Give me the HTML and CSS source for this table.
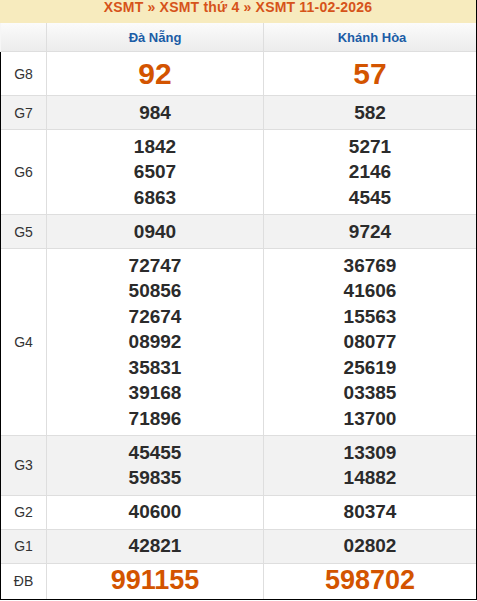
FILE: index.html
```html
<!DOCTYPE html>
<html lang="vi">
<head>
<meta charset="utf-8">
<title>XSMT 11-02-2026</title>
<link rel="stylesheet" href="styles.css">
</head>
<body>
<div class="board">
  <div class="title">XSMT » XSMT thứ 4 » XSMT 11-02-2026</div>
  <div class="row head">
    <div class="cell label"></div>
    <div class="cell prov">Đà Nẵng</div>
    <div class="cell prov c3">Khánh Hòa</div>
  </div>
  <div class="body">
    <div class="row g8">
      <div class="cell label">G8</div>
      <div class="cell nums big"><div>92</div></div>
      <div class="cell nums big c3"><div>57</div></div>
    </div>
    <div class="row alt">
      <div class="cell label">G7</div>
      <div class="cell nums"><div>984</div></div>
      <div class="cell nums c3"><div>582</div></div>
    </div>
    <div class="row">
      <div class="cell label">G6</div>
      <div class="cell nums"><div>1842</div><div>6507</div><div>6863</div></div>
      <div class="cell nums c3"><div>5271</div><div>2146</div><div>4545</div></div>
    </div>
    <div class="row alt">
      <div class="cell label">G5</div>
      <div class="cell nums"><div>0940</div></div>
      <div class="cell nums c3"><div>9724</div></div>
    </div>
    <div class="row">
      <div class="cell label">G4</div>
      <div class="cell nums"><div>72747</div><div>50856</div><div>72674</div><div>08992</div><div>35831</div><div>39168</div><div>71896</div></div>
      <div class="cell nums c3"><div>36769</div><div>41606</div><div>15563</div><div>08077</div><div>25619</div><div>03385</div><div>13700</div></div>
    </div>
    <div class="row alt">
      <div class="cell label">G3</div>
      <div class="cell nums"><div>45455</div><div>59835</div></div>
      <div class="cell nums c3"><div>13309</div><div>14882</div></div>
    </div>
    <div class="row">
      <div class="cell label">G2</div>
      <div class="cell nums"><div>40600</div></div>
      <div class="cell nums c3"><div>80374</div></div>
    </div>
    <div class="row alt">
      <div class="cell label">G1</div>
      <div class="cell nums"><div>42821</div></div>
      <div class="cell nums c3"><div>02802</div></div>
    </div>
    <div class="row db">
      <div class="cell label">ĐB</div>
      <div class="cell nums special"><div>991155</div></div>
      <div class="cell nums special c3"><div>598702</div></div>
    </div>
  </div>
</div>
</body>
</html>
```
FILE: styles.css
```css
* { box-sizing: border-box; }
html, body { margin: 0; padding: 0; background: #fff; }
body { font-family: "Liberation Sans", Arial, sans-serif; color: #2b2b2b; }

.board {
  width: 477px;
  border-right: 1px solid #000;
}

.title {
  height: 23px;
  background: #f7ebbe;
  color: #d6531a;
  font-weight: bold;
  font-size: 14px;
  line-height: 15px;
  letter-spacing: 0.2px;
  text-align: center;
}

.row {
  display: grid;
  grid-template-columns: 45px 217px 1fr;
  border-bottom: 1px solid #dedede;
  background: #fff;
}
.row.alt { background: #f2f2f2; }

.head {
  height: 29px;
  border-left: 1px solid #f6f6f6;
  background: linear-gradient(#fbfbfb, #ececec);
}

.body {
  border-left: 1px solid #000;
  border-bottom: 1px solid #000;
}

.cell {
  display: flex;
  flex-direction: column;
  align-items: center;
  justify-content: center;
}
.cell + .cell { border-left: 1px solid #dedede; }
.c3 { padding-left: 4px; }

.prov {
  color: #1a5ca6;
  font-weight: bold;
  font-size: 13px;
}

.label {
  font-size: 14px;
  color: #333;
}

.nums {
  padding: 3.5px 0 4px;
  font-weight: bold;
  font-size: 19px;
  line-height: 25.5px;
}

.big {
  color: #d35400;
  font-size: 30px;
  line-height: 35.5px;
}

.db { border-bottom: none; }
.special {
  color: #d35400;
  font-size: 27px;
  line-height: 27.5px;
}
```
